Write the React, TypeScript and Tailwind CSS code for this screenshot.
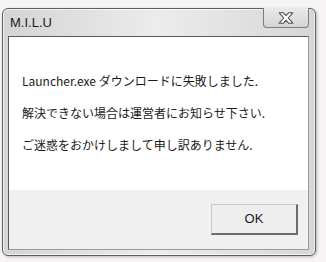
import React from 'react';

const jp = { fontFamily: '"Noto Sans CJK JP", "Noto Sans", sans-serif' };

function CloseGlyph() {
  return (
    <svg width="16" height="12" viewBox="0 0 16 12">
      <path
        d="M1.2 0.8 H5.4 L8 3.6 L10.6 0.8 H14.8 L10.2 6 L14.8 11.2 H10.6 L8 8.4 L5.4 11.2 H1.2 L5.8 6 Z"
        fill="#ffffff"
        stroke="#505050"
        strokeWidth="1.1"
        strokeLinejoin="round"
      />
    </svg>
  );
}

export default function App() {
  const lines = [
    'Launcher.exe ダウンロードに失敗しました.',
    '解決できない場合は運営者にお知らせ下さい.',
    'ご迷惑をおかけしまして申し訳ありません.',
  ];

  return (
    <div className="w-[326px] h-[262px] bg-[#f6f4f4] pl-[2px] pt-[8px] overflow-hidden">
      {/* Window frame */}
      <div className="w-[314px] h-[248px] flex flex-col border border-[#5e5e5e] rounded-[6px] bg-gradient-to-r from-[#d4d4d4] via-[#ececec] to-[#d6d6d6] shadow-[inset_0_0_0_1px_rgba(255,255,255,0.7),1px_1px_3px_rgba(0,0,0,0.25)]">
        {/* Title bar */}
        <div className="h-[27px] flex items-start justify-between pl-[7px] pr-[6px]">
          <span className="mt-[6px] text-[13px] leading-[16px] text-[#1c1c1c] font-['Liberation_Sans',sans-serif]">
            M.I.L.U
          </span>
          <div className="-mt-px w-[46px] h-[20px] flex items-center justify-center border border-t-0 border-[#7c7c7c] rounded-b-[4px] bg-gradient-to-b from-[#eaeaea] to-[#d4d4d4]">
            <CloseGlyph />
          </div>
        </div>

        {/* Client area */}
        <div className="ml-[5px] mr-[6px] h-[214px] flex flex-col border border-[#5a5a5a] border-r-[#9a9a9a] border-b-[#9a9a9a]">
          <div className="h-[153px] bg-white pt-[36px] pl-[13px] flex flex-col gap-[16px]" style={jp}>
            {lines.map((t) => (
              <p key={t} className="text-[12px] leading-[16px] text-[#1a1a1a] whitespace-nowrap">
                {t}
              </p>
            ))}
          </div>
          <div className="flex-1 bg-[#f0f0f0] flex justify-end items-start pt-[14px] pr-[10px]">
            <button className="w-[87px] h-[31px] flex items-center justify-center bg-[#eeeeee] border border-[#c8c8c8] border-r-2 border-b-2 border-r-[#6c6c6c] border-b-[#6c6c6c] text-[13px] text-[#1a1a1a] font-['Liberation_Sans',sans-serif]">
              OK
            </button>
          </div>
        </div>
      </div>
    </div>
  );
}
